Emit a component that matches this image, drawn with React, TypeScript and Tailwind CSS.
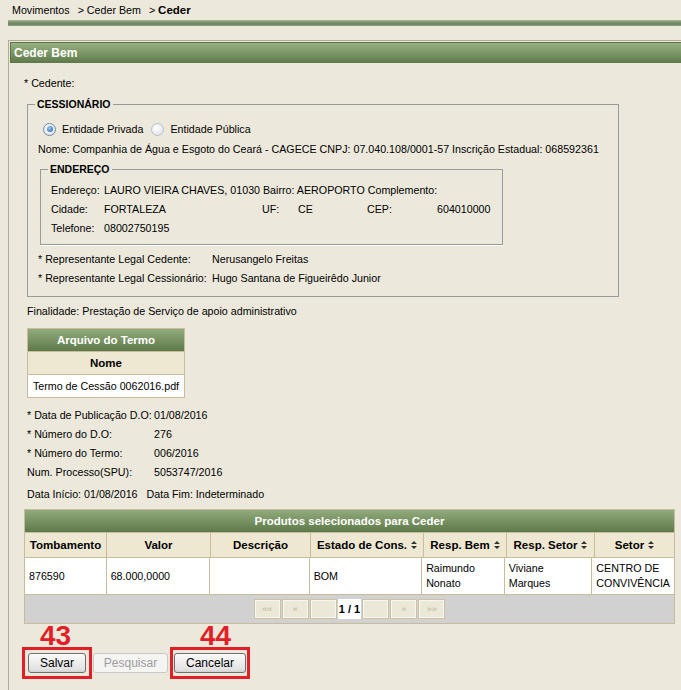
import React from "react";

function Radio({ checked }: { checked?: boolean }) {
  return checked ? (
    <span className="inline-flex h-[13px] w-[13px] shrink-0 items-center justify-center rounded-full border border-[#6d88a6] bg-[radial-gradient(circle_at_40%_35%,#ffffff,#d9dee4)]">
      <span className="h-[6px] w-[6px] rounded-full bg-[radial-gradient(circle_at_40%_35%,#9cc8f2,#1d5bb0)]" />
    </span>
  ) : (
    <span className="inline-flex h-[13px] w-[13px] shrink-0 rounded-full border border-[#b7bfc8] bg-[radial-gradient(circle_at_40%_35%,#ffffff,#dadde2)]" />
  );
}

function Sort() {
  return (
    <svg width="6" height="8" viewBox="0 0 6 8" className="ml-[4px] inline-block">
      <path d="M3 0 L6 3 H0Z M3 8 L0 5 H6Z" fill="#333" />
    </svg>
  );
}

function PagBtn({ label }: { label?: string }) {
  return (
    <span className="flex h-[20px] w-[27px] items-center justify-center border border-[#cbc3a3] bg-[#ece8d8] text-[9px] text-[#bcb497] shadow-[inset_0_0_0_1px_#f8f6ee]">
      {label}
    </span>
  );
}

const cols = ["w-[82px]", "w-[104px]", "w-[100px]", "w-[113px]", "w-[83px]", "w-[88px]", "flex-1"];

export default function App() {
  return (
    <div className="min-h-[690px] w-[681px] overflow-hidden bg-[#ece9dc] font-['Liberation_Sans',Arial,sans-serif] text-[10.7px] leading-[14px] text-black">
      {/* breadcrumb */}
      <div className="flex h-[20px] items-center pl-[12px] text-[10.7px]">
        <span>Movimentos</span>
        <span className="ml-[8px]">&gt; Ceder Bem</span>
        <span className="ml-[8px]">&gt; <span className="text-[11.5px] font-bold">Ceder</span></span>
      </div>
      <div className="ml-[8px] h-[6px] bg-[linear-gradient(to_bottom,#a9b89b,#7b9069_40%,#6c825d_70%,#98a889)]" />

      {/* panel */}
      <div className="ml-[8px] mt-[14px] min-h-[650px] border-l border-t border-[#b2ab94]">
        <div className="ml-[1px] mt-[1px] flex h-[21px] items-center border-l border-t border-[#5b7346] bg-[linear-gradient(to_bottom,#98b182,#5e7949)] pl-[3px] text-[12px] font-bold text-white">
          Ceder Bem
        </div>

        <div className="pl-[15px]">
          <div className="mt-[10px] flex h-[20px] items-center">* Cedente:</div>

          {/* CESSIONARIO */}
          <fieldset className="ml-[3px] mt-[4px] w-[592px] border border-[#9a9a9a]">
            <legend className="ml-[7px] px-[2px] text-[10.5px] font-bold leading-[14px]">CESSIONÁRIO</legend>
            <div className="pb-[9px] pl-[10px] pt-[8px]">
              <div className="flex h-[20px] items-center pl-[5px]">
                <Radio checked />
                <span className="ml-[6px]">Entidade Privada</span>
                <span className="ml-[8px] flex"><Radio /></span>
                <span className="ml-[6px]">Entidade Pública</span>
              </div>
              <div className="flex h-[20px] items-center whitespace-nowrap">
                Nome: Companhia de Água e Esgoto do Ceará - CAGECE CNPJ: 07.040.108/0001-57 Inscrição Estadual: 068592361
              </div>

              {/* ENDERECO */}
              <fieldset className="ml-[2px] mt-[3px] w-[463px] border border-[#9a9a9a] shadow-[0_1px_0_#ffffff]">
                <legend className="ml-[7px] px-[2px] text-[10.5px] font-bold leading-[14px]">ENDEREÇO</legend>
                <div className="grid grid-cols-[53px_158px_36px_69px_70px_auto] pb-[7px] pl-[10px] pt-[4px] [&>div]:flex [&>div]:h-[19px] [&>div]:items-center [&>div]:whitespace-nowrap">
                  <div>Endereço:</div>
                  <div className="col-span-5">LAURO VIEIRA CHAVES, 01030 Bairro: AEROPORTO Complemento:</div>
                  <div>Cidade:</div>
                  <div>FORTALEZA</div>
                  <div>UF:</div>
                  <div>CE</div>
                  <div>CEP:</div>
                  <div>604010000</div>
                  <div>Telefone:</div>
                  <div className="col-span-5">08002750195</div>
                </div>
              </fieldset>

              <div className="mt-[4px] grid grid-cols-[174px_auto] [&>div]:flex [&>div]:h-[19px] [&>div]:items-center [&>div]:whitespace-nowrap">
                <div>* Representante Legal Cedente:</div>
                <div>Nerusangelo Freitas</div>
                <div>* Representante Legal Cessionário:</div>
                <div>Hugo Santana de Figueirêdo Junior</div>
              </div>
            </div>
          </fieldset>

          <div className="ml-[3px] mt-[4px] flex h-[20px] items-center">
            Finalidade: Prestação de Serviço de apoio administrativo
          </div>

          {/* Arquivo do Termo */}
          <div className="ml-[3px] mt-[7px] w-[158px] border border-[#c7bd9c]">
            <div className="flex h-[22px] items-center justify-center bg-[linear-gradient(to_bottom,#92ab7c,#5e7949)] text-[11.5px] font-bold text-white">
              Arquivo do Termo
            </div>
            <div className="flex h-[23px] items-center justify-center border-t border-[#c7bd9c] bg-[#eee8d2] text-[11.5px] font-bold">
              Nome
            </div>
            <div className="flex h-[23px] items-center justify-center whitespace-nowrap border-t border-[#c7bd9c] bg-white">
              Termo de Cessão 0062016.pdf
            </div>
          </div>

          <div className="ml-[3px] mt-[7px] grid grid-cols-[127px_auto] [&>div]:flex [&>div]:h-[19px] [&>div]:items-center [&>div]:whitespace-nowrap">
            <div>* Data de Publicação D.O:</div>
            <div>01/08/2016</div>
            <div>* Número do D.O:</div>
            <div>276</div>
            <div>* Número do Termo:</div>
            <div>006/2016</div>
            <div>Num. Processo(SPU):</div>
            <div>5053747/2016</div>
          </div>

          <div className="ml-[3px] mt-[3px] flex h-[19px] items-center">
            <span>Data Início: 01/08/2016</span>
            <span className="ml-[9px]">Data Fim: Indeterminado</span>
          </div>

          {/* Produtos */}
          <div className="mt-[6px] w-[651px] border border-[#c7bd9c]">
            <div className="flex h-[22px] items-center justify-center bg-[linear-gradient(to_bottom,#92ab7c,#5e7949)] text-[11.5px] font-bold text-white">
              Produtos selecionados para Ceder
            </div>
            <div className="flex h-[25px] border-t border-[#c7bd9c] bg-[#eee8d2] text-[11.5px] font-bold">
              {[
                ["Tombamento", false],
                ["Valor", false],
                ["Descrição", false],
                ["Estado de Cons.", true],
                ["Resp. Bem", true],
                ["Resp. Setor", true],
                ["Setor", true],
              ].map(([t, s], i) => (
                <div
                  key={i}
                  className={`${cols[i]} flex items-center justify-center whitespace-nowrap ${i < 6 ? "border-r border-[#c7bd9c]" : ""}`}
                >
                  {t as string}
                  {s ? <Sort /> : null}
                </div>
              ))}
            </div>
            <div className="flex h-[37px] border-t border-[#c7bd9c] bg-white text-[10.7px] leading-[15px]">
              {["876590", "68.000,0000", "", "BOM", "Raimundo Nonato", "Viviane Marques", "CENTRO DE CONVIVÊNCIA"].map((t, i) => (
                <div
                  key={i}
                  className={`${cols[i]} flex items-center px-[4px] ${i < 6 ? "border-r border-[#c7bd9c]" : ""}`}
                >
                  {t}
                </div>
              ))}
            </div>
            <div className="flex h-[29px] items-center justify-center gap-[1px] border-t border-[#c7bd9c] bg-[#d1d1d1]">
              <PagBtn label="««" />
              <PagBtn label="«" />
              <PagBtn />
              <span className="flex h-[20px] items-center bg-white px-[1px] text-[11px] font-bold">1 / 1</span>
              <PagBtn />
              <PagBtn label="»" />
              <PagBtn label="»»" />
            </div>
          </div>

          {/* Buttons */}
          <div className="-ml-[2px] mt-[23px] flex items-center">
            <div className="relative border-[3px] border-[#e21f26] p-[3px]">
              <span className="absolute bottom-full left-[15px] text-[28px] font-bold leading-none text-[#e21f26]">43</span>
              <button className="flex h-[20px] w-[58px] items-center justify-center rounded-[3px] border border-[#6f6f6f] bg-[linear-gradient(to_bottom,#fbfbfb,#e2e2e2_85%,#d2d2d2)] text-[12px]">
                Salvar
              </button>
            </div>
            <button className="ml-[1px] flex h-[20px] w-[75px] items-center justify-center rounded-[3px] border border-[#c9c9c9] bg-[#f4f4f2] text-[12px] text-[#9c9c9c]">
              Pesquisar
            </button>
            <div className="relative ml-[2px] border-[3px] border-[#e21f26] px-[1px] py-[3px]">
              <span className="absolute bottom-full left-[27px] text-[28px] font-bold leading-none text-[#e21f26]">44</span>
              <button className="flex h-[20px] w-[72px] items-center justify-center rounded-[3px] border border-[#6f6f6f] bg-[linear-gradient(to_bottom,#fbfbfb,#e2e2e2_85%,#d2d2d2)] text-[12px]">
                Cancelar
              </button>
            </div>
          </div>
        </div>
      </div>
    </div>
  );
}
